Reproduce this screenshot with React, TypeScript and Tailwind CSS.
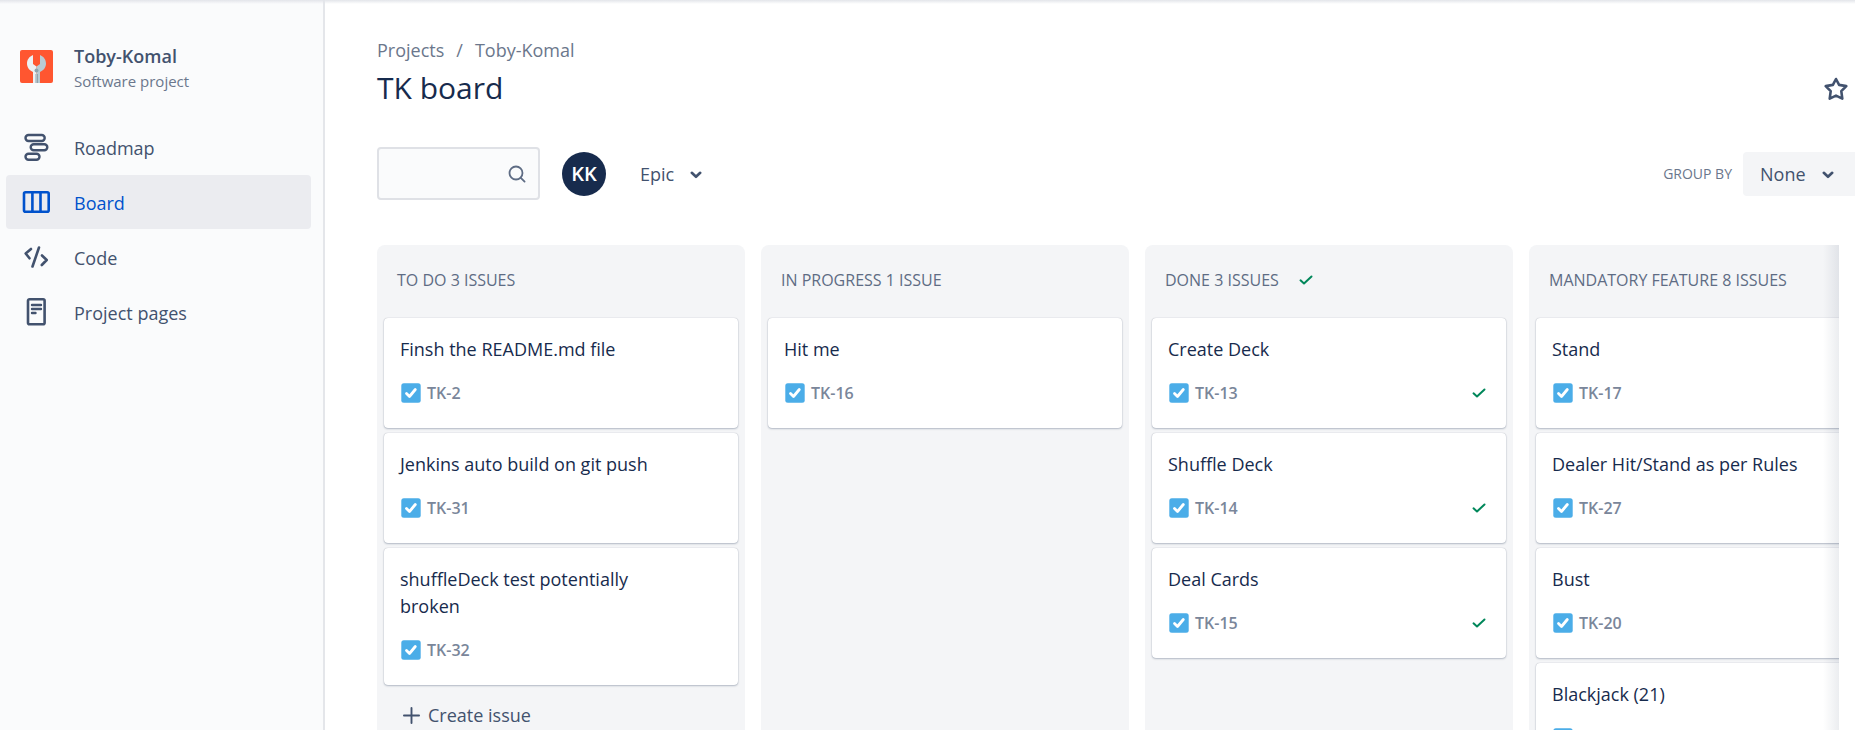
import React from "react";

type Card = { title: string; issue?: string; done?: boolean };
type Column = { name: string; count: number; done?: boolean; create?: boolean; cards: Card[] };

const columns: Column[] = [
  {
    name: "TO DO",
    count: 3,
    create: true,
    cards: [
      { title: "Finsh the README.md file", issue: "TK-2" },
      { title: "Jenkins auto build on git push", issue: "TK-31" },
      { title: "shuffleDeck test potentially broken", issue: "TK-32" },
    ],
  },
  { name: "IN PROGRESS", count: 1, cards: [{ title: "Hit me", issue: "TK-16" }] },
  {
    name: "DONE",
    count: 3,
    done: true,
    cards: [
      { title: "Create Deck", issue: "TK-13", done: true },
      { title: "Shuffle Deck", issue: "TK-14", done: true },
      { title: "Deal Cards", issue: "TK-15", done: true },
    ],
  },
  {
    name: "MANDATORY FEATURE",
    count: 8,
    cards: [
      { title: "Stand", issue: "TK-17" },
      { title: "Dealer Hit/Stand as per Rules", issue: "TK-27" },
      { title: "Bust", issue: "TK-20" },
      { title: "Blackjack (21)" },
    ],
  },
];

function ProjectLogo() {
  return (
    <svg viewBox="0 0 33 33" className="size-[33px] shrink-0" aria-hidden="true">
      <rect width="33" height="33" rx="2" fill="#FF5630" />
      <path d="M13 5C9.300 6.500 7 9.800 7 13.500C7 17.500 9.500 20.500 13 22V33H16.500V16.500L13 14Z" fill="#ECF0F3" />
      <path d="M20 5C23.700 6.500 26 9.800 26 13.500C26 17.500 23.500 20.500 20 22V33H16.500V16.500L20 14Z" fill="#B9CBD3" />
      <path d="M16.500 24H18V33H16.500Z" fill="#8FA5AF" />
      <path d="M15 24H16.500V33H15Z" fill="#B9CBD3" />
      <circle cx="16.500" cy="20.500" r="2" fill="#8FA5AF" />
    </svg>
  );
}

function RoadmapIcon() {
  return (
    <svg viewBox="0 0 32 32" className="size-8" fill="none" stroke="currentColor" strokeWidth="2.400" aria-hidden="true">
      <rect x="5.500" y="4" width="19.200" height="6" rx="3" />
      <rect x="10.700" y="13.300" width="16.600" height="6" rx="3" />
      <rect x="5.500" y="22.700" width="14" height="6" rx="3" />
    </svg>
  );
}

function BoardIcon() {
  return (
    <svg viewBox="0 0 32 32" className="size-8" fill="none" stroke="currentColor" strokeWidth="2.600" aria-hidden="true">
      <rect x="4" y="6.300" width="24.700" height="19.400" rx="1.500" />
      <path d="M12.400 6V26M20.500 6V26" />
    </svg>
  );
}

function CodeIcon() {
  return (
    <svg viewBox="0 0 32 32" className="size-8" fill="none" stroke="currentColor" strokeWidth="2.600" strokeLinecap="round" strokeLinejoin="round" aria-hidden="true">
      <path d="M11 8L5.700 12.500L9.500 17.300M19 6.500L12.500 25.500M22 14.500L26.700 19L21.800 24" />
    </svg>
  );
}

function PagesIcon() {
  return (
    <svg viewBox="0 0 32 32" className="size-8" fill="none" stroke="currentColor" strokeWidth="2.600" aria-hidden="true">
      <rect x="8" y="3.300" width="16.600" height="25" rx="1.500" />
      <path d="M12 9H21M12 13H21M12 17H15.500" strokeWidth="2.400" strokeLinecap="round" />
    </svg>
  );
}

function Chevron() {
  return (
    <svg viewBox="0 0 12 8" className="h-2 w-3" fill="none" stroke="currentColor" strokeWidth="2.600" strokeLinecap="round" strokeLinejoin="round" aria-hidden="true">
      <path d="M1.800 1.800L6 5.800L10.200 1.800" />
    </svg>
  );
}

function DoneCheck() {
  return (
    <svg viewBox="0 0 14 10" className="h-2.5 w-3.5" fill="none" stroke="#00875A" strokeWidth="2" strokeLinecap="round" strokeLinejoin="round" aria-hidden="true">
      <path d="M1.500 5.300L5 8.500L12.500 1.500" />
    </svg>
  );
}

function TaskIcon() {
  return (
    <svg viewBox="0 0 20 20" className="size-5" aria-hidden="true">
      <rect x="0.300" y="0.300" width="19.400" height="19.400" rx="2.500" fill="#4BADE8" />
      <path d="M5.500 10.500L8.500 13.500L14.300 6.500" fill="none" stroke="#fff" strokeWidth="2.800" strokeLinecap="round" strokeLinejoin="round" />
    </svg>
  );
}

const navItems = [
  { label: "Roadmap", Icon: RoadmapIcon },
  { label: "Board", Icon: BoardIcon, active: true },
  { label: "Code", Icon: CodeIcon },
  { label: "Project pages", Icon: PagesIcon },
];

function Sidebar() {
  return (
    <aside className="w-[325px] shrink-0 border-r-2 border-[#E4E6EA] bg-[#FAFBFC]">
      <div className="flex items-start gap-[21px] pt-[42px] pl-5">
        <div className="pt-2">
          <ProjectLogo />
        </div>
        <div>
          <h2 className="text-[18px] leading-7 font-semibold text-[#42526E]">Toby-Komal</h2>
          <p className="text-[15px] leading-[22px] text-[#6B778C]">Software project</p>
        </div>
      </div>
      <nav className="mt-7 flex flex-col gap-px pr-3 pl-1.5">
        {navItems.map(({ label, Icon, active }) => (
          <a
            key={label}
            href="#"
            aria-current={active ? "page" : undefined}
            className={
              active
                ? "flex h-[54px] items-center gap-[22px] rounded bg-[#EBECF0] pl-3.5 text-[18px] text-[#0052CC]"
                : "flex h-[54px] items-center gap-[22px] rounded pl-3.5 text-[18px] text-[#42526E]"
            }
          >
            <Icon />
            <span className="pt-0.5">{label}</span>
          </a>
        ))}
      </nav>
    </aside>
  );
}

function IssueCard({ card }: { card: Card }) {
  return (
    <article className="rounded bg-white px-4 pt-[18px] pb-[25px] shadow-[0_1px_2px_rgba(9,30,66,0.25),0_0_1px_rgba(9,30,66,0.31)]">
      <h4 className="pr-10 text-[18px] leading-[27px] text-[#172B4D]">{card.title}</h4>
      <div className="mt-5 flex h-5 items-center gap-1.5 pl-px">
        <TaskIcon />
        {card.issue && <span className="text-base leading-5 font-semibold text-[#7A869A]">{card.issue}</span>}
        {card.done && (
          <span className="ml-auto pr-1">
            <DoneCheck />
          </span>
        )}
      </div>
    </article>
  );
}

function BoardColumn({ column }: { column: Column }) {
  return (
    <section className="w-[368px] shrink-0 rounded-t-lg bg-[#F4F5F7] px-[7px]">
      <h3 className="flex h-[73px] items-center gap-5 px-[13px] pb-1 text-base text-[#5E6C84]">
        <span>
          {column.name} {column.count} {column.count === 1 ? "ISSUE" : "ISSUES"}
        </span>
        {column.done && <DoneCheck />}
      </h3>
      <div className="flex flex-col gap-[5px]">
        {column.cards.map((card) => (
          <IssueCard key={card.title} card={card} />
        ))}
      </div>
      {column.create && (
        <button type="button" className="mt-1 flex h-[52px] w-full items-center gap-2 pl-[19px] text-[18px] text-[#42526E]">
          <svg viewBox="0 0 18 18" className="size-[17px]" fill="none" stroke="currentColor" strokeWidth="2" strokeLinecap="round" aria-hidden="true">
            <path d="M9 1V17M1 9H17" />
          </svg>
          Create issue
        </button>
      )}
    </section>
  );
}

export default function App() {
  return (
    <div className="relative flex h-screen overflow-hidden bg-white font-['Open_Sans',sans-serif]">
      <div className="absolute inset-x-0 top-0 h-1 bg-linear-to-b from-[#E3E5EA] to-transparent" />
      <Sidebar />
      <main className="flex min-w-0 flex-1 flex-col pl-[52px]">
        <nav aria-label="Breadcrumbs" className="mt-9 flex gap-3 text-[18px] leading-7 text-[#6B778C]">
          <a href="#">Projects</a>
          <span>/</span>
          <a href="#">Toby-Komal</a>
        </nav>
        <div className="flex items-center justify-between pr-[7px]">
          <h1 className="text-3xl leading-[48px] text-[#172B4D]">TK board</h1>
          <button type="button" aria-label="Star board" className="pt-0.5 text-[#42526E]">
            <svg viewBox="0 0 24 24" className="size-6" fill="none" stroke="currentColor" strokeWidth="2.600" strokeLinejoin="round" aria-hidden="true">
              <path d="M12 2L15.100 7.900L22.300 9.100L17.300 14.200L18.300 21.600L12 18.600L5.700 21.600L6.700 14.200L1.700 9.100L8.900 7.900Z" />
            </svg>
          </button>
        </div>
        <div className="mt-[35px] flex items-center text-[18px] text-[#42526E]">
          <label className="flex h-[53px] w-[163px] items-center rounded border-2 border-[#DFE1E6] bg-[#FAFBFC] pr-3 pl-2">
            <input type="text" aria-label="Search board" className="min-w-0 flex-1 bg-transparent outline-none" />
            <svg viewBox="0 0 18 18" className="size-[18px]" fill="none" stroke="#5E6C84" strokeWidth="1.800" strokeLinecap="round" aria-hidden="true">
              <circle cx="8" cy="8" r="6.500" />
              <path d="M12.800 12.800L16.600 16.600" />
            </svg>
          </label>
          <button type="button" className="ml-[22px] flex size-11 items-center justify-center rounded-full bg-[#172B4D] text-xl font-semibold text-white">
            KK
          </button>
          <button type="button" aria-haspopup="menu" className="ml-[34px] flex items-center gap-4 pt-0.5">
            Epic
            <Chevron />
          </button>
          <label htmlFor="group-by" className="ml-auto text-sm text-[#6B778C]">
            GROUP BY
          </label>
          <div className="ml-[11px] grid h-11 w-28 items-center rounded-l bg-[#F4F5F7]">
            <select id="group-by" className="col-start-1 row-start-1 h-11 appearance-none bg-transparent pt-0.5 pl-[17px] outline-none">
              <option>None</option>
            </select>
            <span className="pointer-events-none col-start-1 row-start-1 mr-[21px] justify-self-end pt-0.5">
              <Chevron />
            </span>
          </div>
        </div>
        <div className="relative mt-[45px] mr-4 flex min-h-0 flex-1 gap-4 overflow-hidden">
          {columns.map((column) => (
            <BoardColumn key={column.name} column={column} />
          ))}
          <div className="pointer-events-none absolute inset-y-0 right-0 w-4 bg-linear-to-l from-[#091E42]/8 to-transparent" />
        </div>
      </main>
    </div>
  );
}
